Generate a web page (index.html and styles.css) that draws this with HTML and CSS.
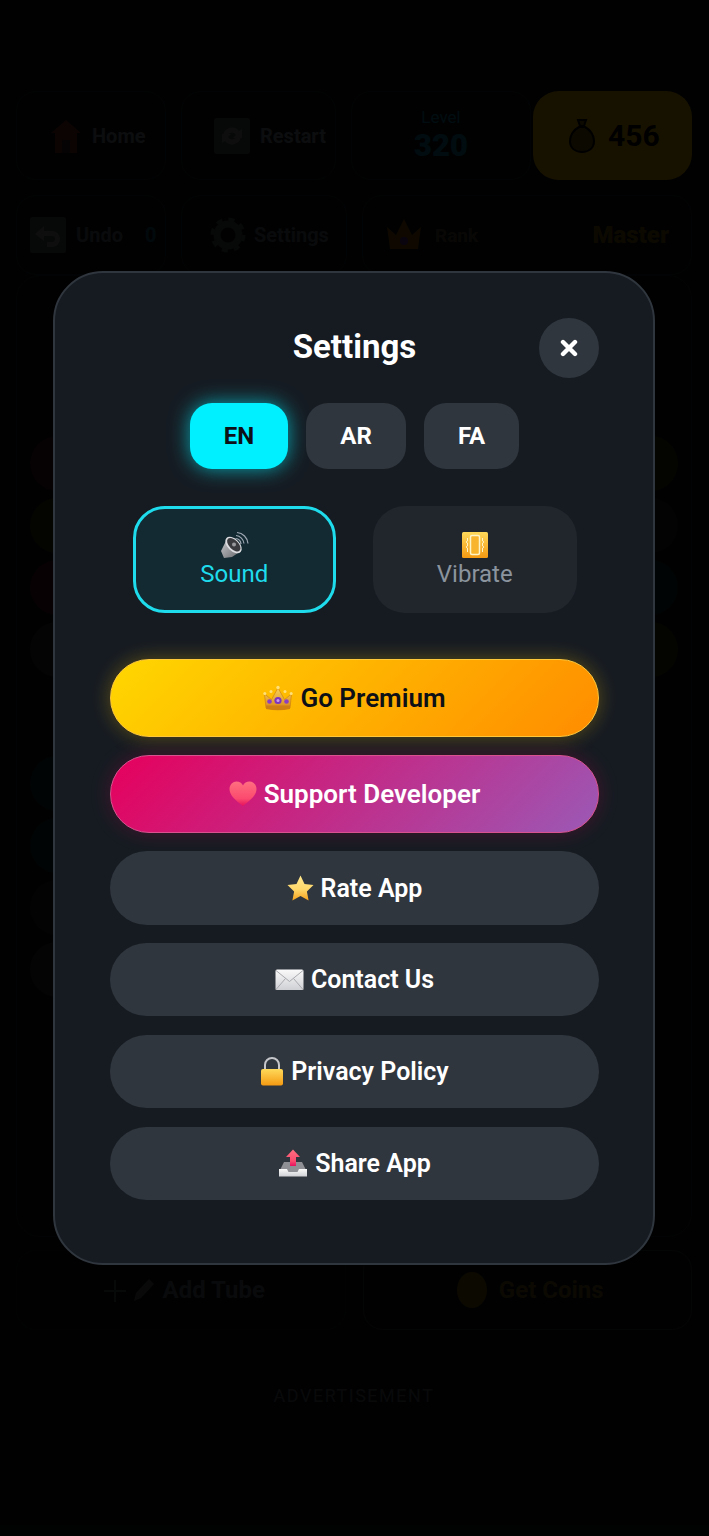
FILE: index.html
```html
<!DOCTYPE html>
<html>
<head>
    <title>Settings</title>
    <link rel="stylesheet" href="styles.css">
</head>
<body>
    <svg class="defs" width="0" height="0">
        <defs>
            <linearGradient id="gold" x1="0" y1="0" x2="0" y2="1"><stop offset="0" stop-color="#ffd95a"/><stop offset="1" stop-color="#f59a12"/></linearGradient>
            <linearGradient id="crown" x1="0" y1="0" x2="0" y2="1"><stop offset="0" stop-color="#f9d25c"/><stop offset="1" stop-color="#d98a1a"/></linearGradient>
            <linearGradient id="star" x1="0" y1="0" x2="0" y2="1"><stop offset="0" stop-color="#ffe98f"/><stop offset=".55" stop-color="#ffd86a"/><stop offset="1" stop-color="#f4a11c"/></linearGradient>
            <linearGradient id="red" x1="0" y1="0" x2="0" y2="1"><stop offset="0" stop-color="#ff6f80"/><stop offset=".7" stop-color="#fb4a6e"/><stop offset="1" stop-color="#e5105f"/></linearGradient>
            <linearGradient id="paper" x1="0" y1="0" x2="0" y2="1"><stop offset="0" stop-color="#fafafa"/><stop offset="1" stop-color="#cfd0d4"/></linearGradient>
            <linearGradient id="cone" x1="0" y1="0" x2="1" y2="1"><stop offset="0" stop-color="#c9cacd"/><stop offset="1" stop-color="#66676b"/></linearGradient>
        </defs>
    </svg>

    <!-- game behind the dialog -->
    <div class="game">
        <div class="top-row">
            <div class="stat home">
                <svg width="32" height="36" viewBox="0 0 32 36"><path d="M16 2L1 15h4v20h22V15h4z" fill="#7a2a20"/><rect x="12" y="22" width="8" height="13" fill="#3a2020"/></svg>
                Home
            </div>
            <div class="stat restart">
                <svg width="36" height="36" viewBox="0 0 36 36"><rect width="36" height="36" rx="2" fill="#4a4f56"/><path d="M9 18a9 9 0 0 1 16-5l3-2v9h-9l3-3a5 5 0 0 0-9 1zM27 18a9 9 0 0 1-16 5l-3 2v-9h9l-3 3a5 5 0 0 0 9-1z" fill="#8c9096"/></svg>
                Restart
            </div>
            <div class="stat level"><small>Level</small><b>320</b></div>
            <div class="stat coins">
                <svg width="26" height="34" viewBox="0 0 26 34"><path d="M9 1h8l-2 6h-4zM10 8h6c6 3 9 9 9 14 0 7-5 11-12 11S1 29 1 22c0-5 3-11 9-14z" fill="#7a5c00" stroke="#000" stroke-width="2"/></svg>
                456
            </div>
        </div>
        <div class="top-row second">
            <div class="stat undo">
                <svg width="36" height="36" viewBox="0 0 36 36"><rect width="36" height="36" rx="2" fill="#4a4f56"/><path d="M5 17l9-8v5h8a8 8 0 0 1 0 16h-5v-5h5a3 3 0 0 0 0-6h-8v5z" fill="#8c9096"/></svg>
                Undo <em>0</em>
            </div>
            <div class="stat gear">
                <svg width="36" height="36" viewBox="0 0 36 36"><circle cx="18" cy="18" r="11" fill="none" stroke="#4a4f56" stroke-width="7"/><circle cx="18" cy="18" r="15.500" fill="none" stroke="#4a4f56" stroke-width="4" stroke-dasharray="6 6.170"/></svg>
                Settings
            </div>
            <div class="stat rank">
                <svg width="38" height="36" viewBox="0 0 38 36"><path d="M5 32L2 10l9 8 8-16 8 16 9-8-3 22z" fill="#8a5810"/><circle cx="19" cy="24" r="4" fill="#5a2a90"/></svg>
                <i>Rank</i>
                <strong>Master</strong>
            </div>
        </div>
        <div class="board">
            <div class="tube"><span class="c1"></span><span class="c2"></span><span class="c3"></span><span class="c4"></span></div>
            <div class="tube"></div><div class="tube"></div><div class="tube"></div>
            <div class="tube"><span class="c2"></span><span class="c5"></span><span class="c6"></span><span class="c2"></span></div>
            <div class="tube"><span class="c6"></span><span class="c6"></span><span class="c5"></span><span class="c4"></span></div>
        </div>
        <div class="actions">
            <div class="action">
                <svg width="52" height="30" viewBox="0 0 52 30"><path d="M12 5v22M1 16h22" stroke="#4a4f56" stroke-width="2"/><path d="M31 26l2-8 13-14 5 5-13 14z" fill="#5a6068"/></svg>
                Add Tube
            </div>
            <div class="action outlined"><span class="coin"></span>Get Coins</div>
        </div>
        <div class="ad">ADVERTISEMENT</div>
    </div>

    <div class="overlay">
        <div class="modal">
            <div class="modal-head">
                <h2>Settings</h2>
                <button class="close" type="button">
                    <svg width="18" height="18" viewBox="0 0 18 18"><path d="M3 3l12 12M15 3L3 15" stroke="#fff" stroke-width="4.4" stroke-linecap="round"/></svg>
                </button>
            </div>

            <div class="langs">
                <button class="lang active" type="button">EN</button>
                <button class="lang ar" type="button">AR</button>
                <button class="lang fa" type="button">FA</button>
            </div>

            <div class="toggles">
                <button class="toggle on" type="button">
                    <svg width="30" height="28" viewBox="0 0 30 28">
                        <path d="M17 4.500a9 9 0 0 1 8 8M18 1.500a12 12 0 0 1 11 11M16.500 7.500a6 6 0 0 1 5.500 5.500" fill="none" stroke="#9ea7b2" stroke-width="1.200"/>
                        <path d="M8 8L2 20l3 7 8-1 9-6z" fill="url(#cone)"/>
                        <ellipse cx="14.500" cy="14" rx="10" ry="6" transform="rotate(45 14.500 14)" fill="#dcdde0"/>
                        <ellipse cx="14.800" cy="13.700" rx="8.300" ry="4.600" transform="rotate(45 14.800 13.700)" fill="#3a3b3f"/>
                        <circle cx="15" cy="13.500" r="2" fill="#98999d"/>
                    </svg>
                    <span>Sound</span>
                </button>
                <button class="toggle" type="button">
                    <svg width="28" height="28" viewBox="0 0 28 28">
                        <rect x="1" y="1" width="26" height="26" rx="1.500" fill="url(#gold)"/>
                        <rect x="9.500" y="4.500" width="9" height="19" rx="1.500" fill="#f7b42c" stroke="#fff3c8" stroke-width="1.500"/>
                        <path d="M6.500 7v3l-1.500 1 1.500 1v3l-1.500 1 1.500 1v4M21.500 7v3l1.500 1-1.500 1v3l1.500 1-1.500 1v4" fill="none" stroke="#fff3c8" stroke-width="1"/>
                    </svg>
                    <span>Vibrate</span>
                </button>
            </div>

            <div class="menu">
                <button class="menu-btn premium" type="button">
                    <svg width="30" height="26" viewBox="0 0 30 26">
                        <path d="M3 23L1.500 9l7 5.500L15 3l6.500 11.500 7-5.500L27 23z" fill="url(#crown)" stroke="#c97a10" stroke-width=".6"/>
                        <path d="M3 20.500h24V24q-12 2.500-24 0z" fill="#cf8012"/>
                        <circle cx="15" cy="15.500" r="3.600" fill="#7d35c0"/>
                        <circle cx="15" cy="15.500" r="1.500" fill="#c79af0"/>
                        <circle cx="6.500" cy="16.500" r="2.300" fill="#8a3fc4"/>
                        <circle cx="23.500" cy="16.500" r="2.300" fill="#8a3fc4"/>
                        <circle cx="15" cy="2.500" r="1.700" fill="#ffe07a"/>
                        <circle cx="1.800" cy="8.500" r="1.500" fill="#ffe07a"/>
                        <circle cx="28.200" cy="8.500" r="1.500" fill="#ffe07a"/>
                        <circle cx="8" cy="6.500" r="1.500" fill="#ffe07a"/>
                        <circle cx="22" cy="6.500" r="1.500" fill="#ffe07a"/>
                    </svg>
                    <span>Go Premium</span>
                </button>
                <button class="menu-btn support" type="button">
                    <svg width="28" height="26" viewBox="0 0 28 26"><path d="M14 25C6 19 .5 14 .5 8 .5 3.500 4 .5 7.500 .5c3 0 5.300 1.500 6.500 4 1.200-2.500 3.500-4 6.500-4C24 .5 27.500 3.500 27.500 8c0 6-5.500 11-13.500 17z" fill="url(#red)"/></svg>
                    <span>Support Developer</span>
                </button>
                <button class="menu-btn" type="button">
                    <svg width="27" height="26" viewBox="0 0 27 26"><path d="M13.500 .5l4 8.400 9 1.200-6.600 6.300 1.700 9.100-8.100-4.400-8.100 4.400 1.700-9.100L.5 10.100l9-1.200z" fill="url(#star)"/></svg>
                    <span>Rate App</span>
                </button>
                <button class="menu-btn" type="button">
                    <svg width="29" height="22" viewBox="0 0 29 22">
                        <rect x=".5" y=".5" width="28" height="20.500" rx="1.500" fill="url(#paper)"/>
                        <path d="M1 1.500l13.500 11L28 1.500M1 20.500l9.500-11M28 20.500l-9.500-11" fill="none" stroke="#a9aaae" stroke-width="1"/>
                    </svg>
                    <span>Contact Us</span>
                </button>
                <button class="menu-btn" type="button">
                    <svg width="24" height="29" viewBox="0 0 24 29">
                        <path d="M5 13V8a7 7 0 0 1 14 0v5" fill="none" stroke="#c4c6ca" stroke-width="2"/>
                        <rect x="1" y="12" width="22" height="16.500" rx="2" fill="url(#gold)"/>
                    </svg>
                    <span>Privacy Policy</span>
                </button>
                <button class="menu-btn" type="button">
                    <svg width="30" height="28" viewBox="0 0 30 28">
                        <path d="M6 13h18l5 10H1z" fill="#8f9095"/>
                        <path d="M1 20h8l1.500 3h9l1.500-3h8v7.500H1z" fill="url(#paper)"/>
                        <path d="M15 .5l7 7.500h-4v9h-6v-9H8z" fill="url(#red)"/>
                    </svg>
                    <span>Share App</span>
                </button>
            </div>
        </div>
    </div>
</body>
</html>
```

FILE: styles.css
```css
* {
    box-sizing: border-box;
}

html, body {
    margin: 0;
    height: 100%;
}

body {
    position: relative;
    width: 709px;
    height: 1536px;
    overflow: hidden;
    background-color: #0d1117;
    font-family: Roboto, "Liberation Sans", sans-serif;
}

.defs {
    position: absolute;
}

button {
    border: none;
    font-family: inherit;
    cursor: pointer;
}

/* game behind the dialog */
.game {
    display: flex;
    flex-direction: column;
    height: 100%;
    padding: 91px 17px 0 16px;
    color: #7d858e;
}

.top-row {
    display: flex;
    height: 89px;
    align-items: stretch;
}

.top-row.second {
    height: 80px;
    margin-top: 15px;
    color: #60666e;
}

.stat {
    display: flex;
    align-items: center;
    gap: 10px;
    border: 1px solid #1d2229;
    border-radius: 20px;
    font-size: 20px;
    font-weight: 700;
}

.stat em {
    color: #1a5f78;
    font-style: normal;
    margin-left: 12px;
}

.home {
    width: 150px;
    padding-left: 33px;
    margin-right: 15px;
}

.restart {
    width: 155px;
    padding-left: 32px;
    margin-right: 15px;
}

.level {
    width: 180px;
    margin-right: 2px;
    flex-direction: column;
    justify-content: center;
    gap: 0;
    color: #007fa0;
}

.level small {
    font-size: 17px;
    font-weight: 400;
}

.level b {
    font-size: 31px;
}

.coins {
    width: 159px;
    padding-left: 36px;
    background-color: #ecb000;
    border: none;
    border-radius: 26px;
    color: #000;
    font-size: 30px;
    gap: 13px;
}

.undo {
    width: 150px;
    padding-left: 13px;
    margin-right: 15px;
}

.gear {
    width: 166px;
    padding-left: 28px;
    margin-right: 15px;
    gap: 8px;
}

.rank {
    flex: 1;
    padding: 0 22px;
    gap: 12px;
}

.rank i {
    font-size: 19px;
    font-style: normal;
    color: #5a4c3c;
}

.rank strong {
    margin-left: auto;
    font-size: 24px;
    color: #7c600e;
}

.board {
    flex: none;
    height: 962px;
    display: grid;
    grid-template-columns: repeat(5, 55px);
    grid-template-rows: repeat(2, 248px);
    justify-content: space-between;
    row-gap: 72px;
    padding: 160px 13px 0;
    border: 1px solid #1d2229;
    border-radius: 24px;
}

.tube {
    display: flex;
    flex-direction: column;
    gap: 7px;
}

.tube span {
    height: 55px;
    border-radius: 50%;
}

.c1 { background-color: #401024; }
.c2 { background-color: #343408; }
.c3 { background-color: #4a0c22; }
.c4 { background-color: #2a2a2a; }
.c5 { background-color: #2a2024; }
.c6 { background-color: #0c2a2a; }

.actions {
    display: flex;
    gap: 17px;
    height: 80px;
    margin-top: 13px;
}

.action {
    flex: 1;
    display: flex;
    align-items: center;
    justify-content: center;
    gap: 8px;
    padding-left: 6px;
    border: 1px solid #15191f;
    border-radius: 20px;
    font-size: 24px;
    font-weight: 700;
    color: #5f656d;
}

.action.outlined {
    border-color: #2d333b;
    color: #705e14;
    gap: 12px;
}

.coin {
    width: 30px;
    height: 36px;
    border-radius: 50%;
    background-color: #7a5c00;
}

.ad {
    margin-top: 55px;
    text-align: center;
    font-size: 18px;
    letter-spacing: 1.5px;
    color: #5a6068;
}

/* settings dialog */
.overlay {
    position: absolute;
    inset: 0;
    display: flex;
    align-items: center;
    justify-content: center;
    background-color: rgba(0, 0, 0, 0.9);
}

.modal {
    width: 602px;
    margin-right: 1px;
    padding: 45px 54px 63px 55px;
    border: 2px solid #30363d;
    border-radius: 50px;
    background-color: #161b22;
}

.modal-head {
    position: relative;
    height: 60px;
    display: flex;
    align-items: center;
    justify-content: center;
}

.modal-head h2 {
    margin: 0;
    margin-top: -3px;
    color: #fff;
    font-size: 33px;
    font-weight: 700;
}

.close {
    position: absolute;
    top: 0;
    right: 0;
    width: 60px;
    height: 60px;
    display: flex;
    align-items: center;
    justify-content: center;
    border-radius: 50%;
    background-color: #30363d;
}

.langs {
    display: flex;
    justify-content: center;
    gap: 18px;
    margin-top: 25px;
}

.lang {
    width: 98px;
    height: 66px;
    border-radius: 22px;
    background-color: #30363d;
    color: #fff;
    font-size: 24px;
    font-weight: 700;
}

.lang.ar {
    width: 100px;
}

.lang.fa {
    width: 95px;
}

.lang.active {
    background-color: #00f0ff;
    color: #0d1117;
    box-shadow: 0 0 20px rgba(0, 240, 255, 0.65);
}

.toggles {
    display: flex;
    justify-content: center;
    gap: 37px;
    margin-top: 37px;
}

.toggle {
    width: 203.5px;
    height: 107px;
    display: flex;
    flex-direction: column;
    align-items: center;
    justify-content: center;
    border: 3px solid transparent;
    border-radius: 32px;
    background-color: #21262d;
    color: #8b949e;
    font-size: 24px;
    line-height: 28px;
}

.toggle svg {
    display: block;
    margin-bottom: 1px;
}

.toggle.on {
    border-color: #1fdcec;
    background-color: #132a33;
    color: #1fdcec;
}

.menu {
    display: flex;
    flex-direction: column;
    gap: 18.4px;
    margin-top: 46px;
}

.menu-btn {
    height: 73.4px;
    display: flex;
    align-items: center;
    justify-content: center;
    gap: 7px;
    border-radius: 37px;
    background-color: #30363d;
    color: #fff;
    font-size: 25px;
    font-weight: 600;
}

.premium {
    height: 77.8px;
    border: 1px solid #ffc83a;
    border-radius: 39px;
    background-image: linear-gradient(135deg, #ffd700, #ff8c00);
    color: #0d1117;
    font-size: 26px;
    box-shadow: 0 0 20px rgba(255, 200, 0, 0.3);
}

.support {
    height: 77.8px;
    border: 1px solid #d8528f;
    border-radius: 39px;
    background-image: linear-gradient(135deg, #e6005c, #9b59b6);
    font-size: 26px;
    box-shadow: 0 0 20px rgba(230, 0, 92, 0.22);
}
```
